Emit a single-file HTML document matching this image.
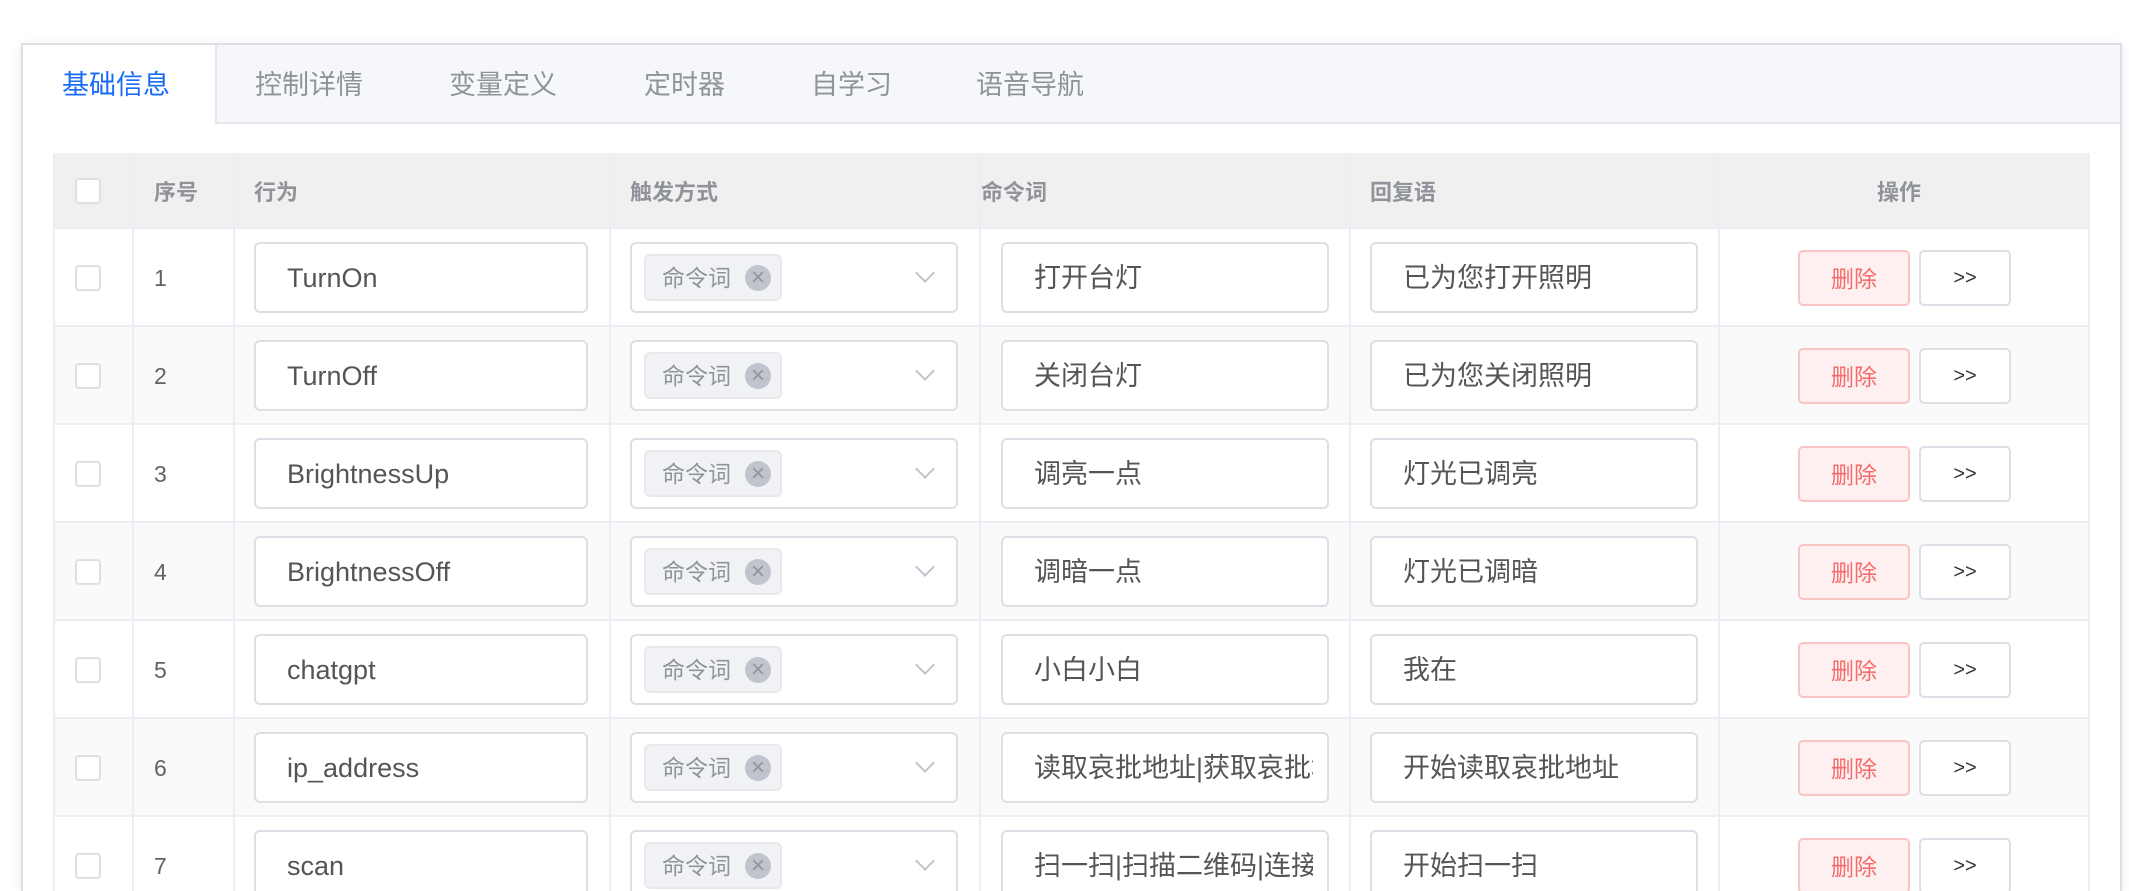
<!DOCTYPE html>
<html><head><meta charset="utf-8"><style>
*{box-sizing:border-box;margin:0;padding:0}
html,body{width:2129px;height:891px;overflow:hidden}
body{background:#fff;font-family:"Liberation Sans","Noto Sans CJK SC",sans-serif;color:#606266;position:relative}
#wrap{position:absolute;left:0;top:0;width:2129px;height:891px;overflow:hidden}
.card{position:absolute;left:21px;top:43px;width:2101px;height:848px;border:2px solid #dcdfe6;border-bottom:none;box-shadow:0 2px 10px rgba(0,0,0,.08);background:#fff}
.tabbar{position:absolute;left:0;top:0;right:0;height:79px;background:#f5f7fa;border-bottom:2px solid #e4e7ed}
.tab{position:absolute;top:0;height:79px;line-height:81px;font-size:27px;color:#909399}
.tab.active{left:0;width:194px;background:#fff;border-right:2px solid #e4e7ed;height:79px;color:#1a6cf5;padding-left:39px}
.tbl{position:absolute;left:53px;top:153px;width:2037px;height:738px;overflow:hidden}
.row{position:absolute;left:0;width:2037px;height:98px;border-bottom:2px solid #ebeef5}
.row.s{background:#fafafa}
.hdr{position:absolute;left:0;top:0;width:2037px;height:76px;background:#f0f0f0;border-bottom:2px solid #ebeef5}
.vl{position:absolute;top:0;width:2px;height:738px;background:#ebeef5}
.h{position:absolute;top:0;line-height:80px;font-size:22px;font-weight:bold;color:#909399}
.cb{position:absolute;left:22px;width:26px;height:26px;border:2px solid #dcdfe6;border-radius:4px;background:#fff}
.num{position:absolute;left:101px;font-size:23px;line-height:98px;top:0}
.inp{position:absolute;top:13px;height:71px;border:2px solid #dcdfe6;border-radius:6px;background:#fff;font-size:27px;line-height:69px;padding-left:31px;white-space:nowrap;overflow:hidden;color:#555}
.inp span{display:block;overflow:hidden;width:100%}
.tag{position:absolute;left:12px;top:10px;width:138px;height:47px;background:#f0f2f5;border:2px solid #e9e9eb;border-radius:6px;font-size:23px;line-height:45px;padding-left:16px;color:#909399}
.tag i{position:absolute;left:99px;top:9px;width:26px;height:26px;border-radius:50%;background:#c0c4cc;color:#909399;font-style:normal;font-size:24px;line-height:25px;text-align:center}
.arr{position:absolute;right:24px;top:22px;width:14px;height:14px;border-right:2px solid #c0c4cc;border-bottom:2px solid #c0c4cc;transform:rotate(45deg)}
.del{position:absolute;left:1745px;top:21px;width:112px;height:56px;background:#fef0f0;border:2px solid #fbc4c4;border-radius:5px;color:#f56c6c;font-size:23px;line-height:54px;text-align:center}
.go{position:absolute;left:1866px;top:21px;width:92px;height:56px;background:#fff;border:2px solid #dcdfe6;border-radius:5px;color:#333;font-size:20px;line-height:52px;text-align:center}
</style></head><body><div id="wrap">
<div class="card">
 <div class="tabbar">
  <div class="tab active">基础信息</div>
  <div class="tab" style="left:232px">控制详情</div>
  <div class="tab" style="left:426px">变量定义</div>
  <div class="tab" style="left:621px">定时器</div>
  <div class="tab" style="left:788px">自学习</div>
  <div class="tab" style="left:953px">语音导航</div>
 </div>
</div>
<div class="tbl">
 <div class="hdr">
  <div class="cb" style="top:25px"></div>
  <div class="h" style="left:101px">序号</div>
  <div class="h" style="left:201px">行为</div>
  <div class="h" style="left:577px">触发方式</div>
  <div class="h" style="left:928px">命令词</div>
  <div class="h" style="left:1317px">回复语</div>
  <div class="h" style="left:1824px">操作</div>
 </div>

 <div class="row" style="top:76px"><div class="cb" style="top:36px"></div><div class="num">1</div>
  <div class="inp" style="left:201px;width:334px">TurnOn</div>
  <div class="inp" style="left:577px;width:328px;padding:0"><div class="tag">命令词<i>×</i></div><div class="arr"></div></div>
  <div class="inp" style="left:948px;width:328px">打开台灯</div>
  <div class="inp" style="left:1317px;width:328px">已为您打开照明</div>
  <div class="del">删除</div><div class="go">&gt;&gt;</div></div>

 <div class="row s" style="top:174px"><div class="cb" style="top:36px"></div><div class="num">2</div>
  <div class="inp" style="left:201px;width:334px">TurnOff</div>
  <div class="inp" style="left:577px;width:328px;padding:0"><div class="tag">命令词<i>×</i></div><div class="arr"></div></div>
  <div class="inp" style="left:948px;width:328px">关闭台灯</div>
  <div class="inp" style="left:1317px;width:328px">已为您关闭照明</div>
  <div class="del">删除</div><div class="go">&gt;&gt;</div></div>

 <div class="row" style="top:272px"><div class="cb" style="top:36px"></div><div class="num">3</div>
  <div class="inp" style="left:201px;width:334px">BrightnessUp</div>
  <div class="inp" style="left:577px;width:328px;padding:0"><div class="tag">命令词<i>×</i></div><div class="arr"></div></div>
  <div class="inp" style="left:948px;width:328px">调亮一点</div>
  <div class="inp" style="left:1317px;width:328px">灯光已调亮</div>
  <div class="del">删除</div><div class="go">&gt;&gt;</div></div>

 <div class="row s" style="top:370px"><div class="cb" style="top:36px"></div><div class="num">4</div>
  <div class="inp" style="left:201px;width:334px">BrightnessOff</div>
  <div class="inp" style="left:577px;width:328px;padding:0"><div class="tag">命令词<i>×</i></div><div class="arr"></div></div>
  <div class="inp" style="left:948px;width:328px">调暗一点</div>
  <div class="inp" style="left:1317px;width:328px">灯光已调暗</div>
  <div class="del">删除</div><div class="go">&gt;&gt;</div></div>

 <div class="row" style="top:468px"><div class="cb" style="top:36px"></div><div class="num">5</div>
  <div class="inp" style="left:201px;width:334px">chatgpt</div>
  <div class="inp" style="left:577px;width:328px;padding:0"><div class="tag">命令词<i>×</i></div><div class="arr"></div></div>
  <div class="inp" style="left:948px;width:328px">小白小白</div>
  <div class="inp" style="left:1317px;width:328px">我在</div>
  <div class="del">删除</div><div class="go">&gt;&gt;</div></div>

 <div class="row s" style="top:566px"><div class="cb" style="top:36px"></div><div class="num">6</div>
  <div class="inp" style="left:201px;width:334px">ip_address</div>
  <div class="inp" style="left:577px;width:328px;padding:0"><div class="tag">命令词<i>×</i></div><div class="arr"></div></div>
  <div class="inp" style="left:948px;width:328px;padding-right:14px"><span>读取哀批地址|获取哀批地址</span></div>
  <div class="inp" style="left:1317px;width:328px">开始读取哀批地址</div>
  <div class="del">删除</div><div class="go">&gt;&gt;</div></div>

 <div class="row" style="top:664px"><div class="cb" style="top:36px"></div><div class="num">7</div>
  <div class="inp" style="left:201px;width:334px">scan</div>
  <div class="inp" style="left:577px;width:328px;padding:0"><div class="tag">命令词<i>×</i></div><div class="arr"></div></div>
  <div class="inp" style="left:948px;width:328px;padding-right:14px"><span>扫一扫|扫描二维码|连接网络</span></div>
  <div class="inp" style="left:1317px;width:328px">开始扫一扫</div>
  <div class="del">删除</div><div class="go">&gt;&gt;</div></div>

 <div class="vl" style="left:0"></div>
 <div class="vl" style="left:79px"></div>
 <div class="vl" style="left:180px"></div>
 <div class="vl" style="left:556px"></div>
 <div class="vl" style="left:926px"></div>
 <div class="vl" style="left:1296px"></div>
 <div class="vl" style="left:1665px"></div>
 <div class="vl" style="left:2035px"></div>
</div>
</div></body></html>
